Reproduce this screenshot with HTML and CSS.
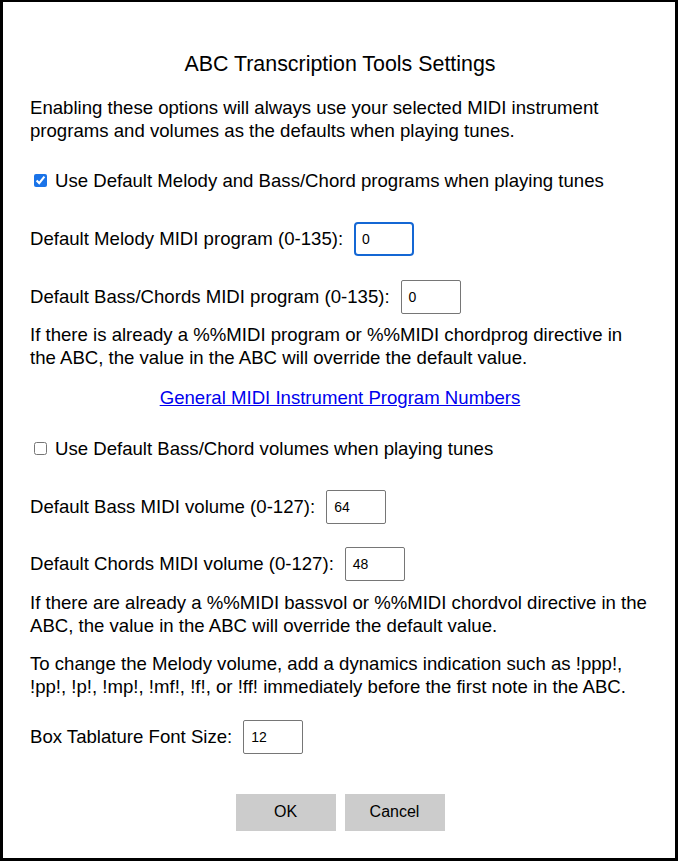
FILE: index.html
```html
<!DOCTYPE html>
<html>
<head>
<meta charset="utf-8">
<link rel="stylesheet" href="styles.css">
</head>
<body>
<div class="dialog">
  <div class="title">ABC Transcription Tools Settings</div>
  <p class="para p-intro">Enabling these options will always use your selected MIDI instrument programs and volumes as the defaults when playing tunes.</p>
  <label class="check-row cr-1"><input type="checkbox" class="cb" checked> Use Default Melody and Bass/Chord programs when playing tunes</label>
  <div class="field-row fr-melody"><span>Default Melody MIDI program (0-135):</span><span class="input focused">0</span></div>
  <div class="field-row fr-bass"><span>Default Bass/Chords MIDI program (0-135):</span><span class="input">0</span></div>
  <p class="para p-override1">If there is already a %%MIDI program or %%MIDI chordprog directive in the ABC, the value in the ABC will override the default value.</p>
  <div class="link-row"><a href="#" class="link">General MIDI Instrument Program Numbers</a></div>
  <label class="check-row cr-2"><input type="checkbox" class="cb"> Use Default Bass/Chord volumes when playing tunes</label>
  <div class="field-row fr-bassvol"><span>Default Bass MIDI volume (0-127):</span><span class="input">64</span></div>
  <div class="field-row fr-chordvol"><span>Default Chords MIDI volume (0-127):</span><span class="input">48</span></div>
  <p class="para p-override2">If there are already a %%MIDI bassvol or %%MIDI chordvol directive in the ABC, the value in the ABC will override the default value.</p>
  <p class="para p-melody">To change the Melody volume, add a dynamics indication such as !ppp!, !pp!, !p!, !mp!, !mf!, !f!, or !ff! immediately before the first note in the ABC.</p>
  <div class="field-row fr-box"><span>Box Tablature Font Size:</span><span class="input">12</span></div>
  <div class="buttons">
    <button class="btn">OK</button>
    <button class="btn">Cancel</button>
  </div>
</div>
</body>
</html>
```
FILE: styles.css
```css
html, body {
  margin: 0;
  padding: 0;
  background: #fff;
}
body {
  font-family: "Liberation Sans", Arial, Helvetica, sans-serif;
  color: #000;
}
.dialog {
  box-sizing: border-box;
  width: 678px;
  height: 861px;
  border: 3px solid #000;
  border-top-width: 2px;
  padding: 0 25px 0 27px;
  display: flex;
  flex-direction: column;
}
.title {
  font-size: 21.4px;
  line-height: 24px;
  text-align: center;
  margin-top: 50px;
}
.para {
  font-size: 18.6px;
  line-height: 23px;
  margin: 0;
}
.p-intro { margin-top: 19.5px; }
.check-row {
  display: flex;
  align-items: center;
  font-size: 18.6px;
  line-height: 23px;
  height: 23px;
  white-space: nowrap;
}
.cr-1 { margin-top: 27.5px; }
.cr-2 { margin-top: 28px; }
.cb {
  width: 13px;
  height: 13px;
  margin: 0 8px 0 4px;
  accent-color: #1a73e8;
}
.field-row {
  display: flex;
  align-items: center;
  gap: 11px;
  font-size: 18.6px;
  height: 34px;
  white-space: nowrap;
}
.fr-melody { margin-top: 29.5px; }
.fr-bass { margin-top: 24px; }
.fr-bassvol { margin-top: 29.5px; }
.fr-chordvol { margin-top: 23px; }
.fr-box { margin-top: 21.5px; }
.input {
  box-sizing: border-box;
  width: 60px;
  height: 34px;
  border: 1px solid #767676;
  border-radius: 2px;
  font-size: 14px;
  line-height: 32px;
  padding-left: 7px;
}
.input.focused {
  border: 2px solid #1467d4;
  border-radius: 4px;
  line-height: 30px;
  padding-left: 6px;
}
.p-override1 { margin-top: 9.5px; }
.link-row {
  text-align: center;
  font-size: 18.6px;
  line-height: 23px;
  margin-top: 17px;
}
.link {
  color: #0000ee;
  text-decoration: underline;
}
.p-override2 { margin-top: 10.5px; }
.p-melody { margin-top: 15px; }
.buttons {
  display: flex;
  justify-content: center;
  gap: 9px;
  margin-top: 40px;
}
.btn {
  width: 100px;
  height: 37px;
  border: none;
  background: #cccccc;
  font-family: "Liberation Sans", Arial, sans-serif;
  font-size: 16px;
  color: #000;
  padding: 0;
}
```
